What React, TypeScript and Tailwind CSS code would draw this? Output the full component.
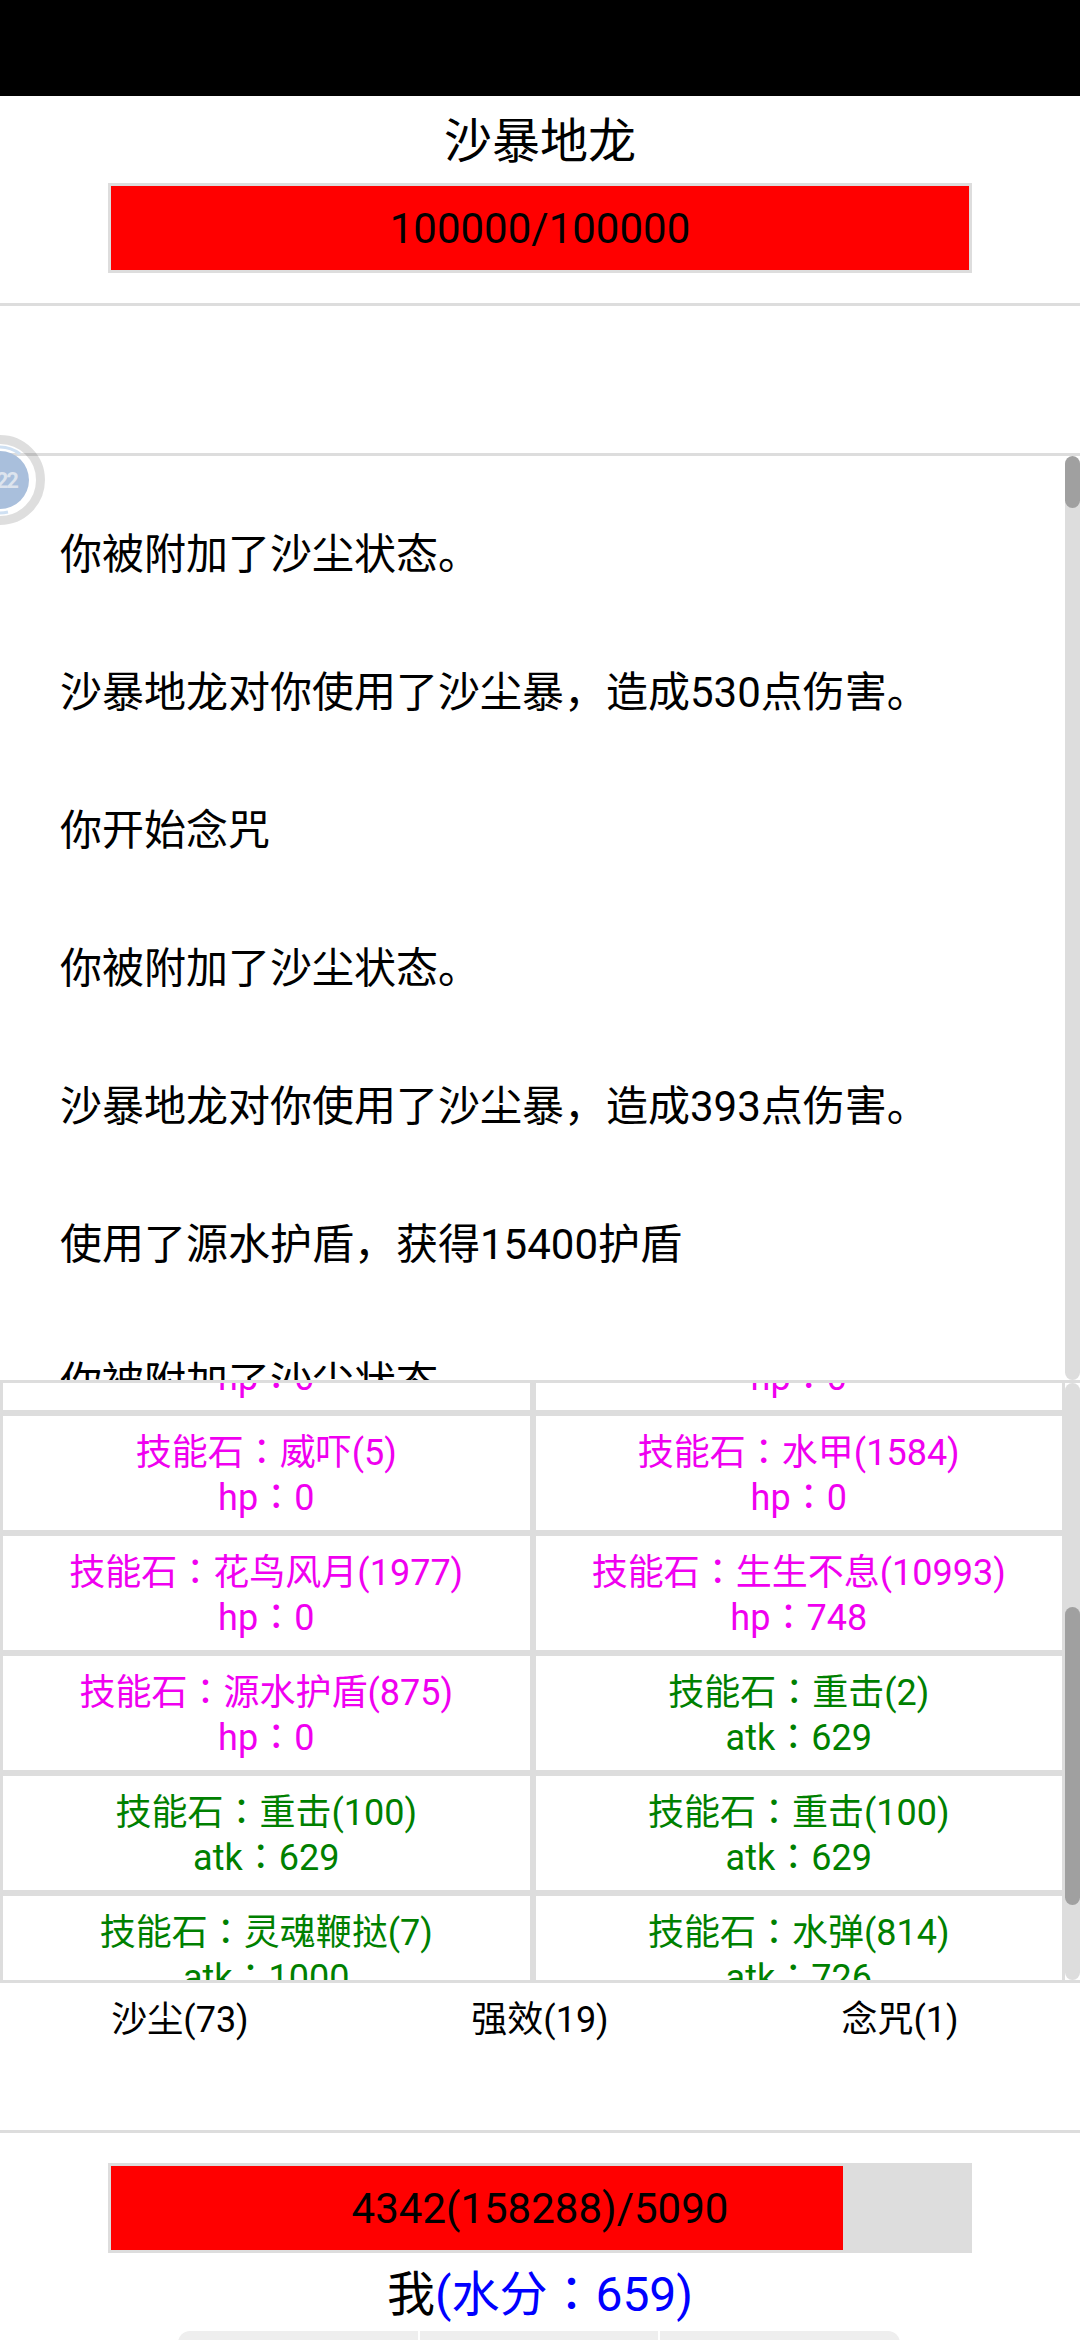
import { useEffect, useRef } from "react";

const logs = [
  "你被附加了沙尘状态。",
  "沙暴地龙对你使用了沙尘暴，造成530点伤害。",
  "你开始念咒",
  "你被附加了沙尘状态。",
  "沙暴地龙对你使用了沙尘暴，造成393点伤害。",
  "使用了源水护盾，获得15400护盾",
  "你被附加了沙尘状态。",
];

type Stone = { name: string; stat: string; tone: "hp" | "atk" };

const stones: Stone[] = [
  { name: "技能石：水甲(12)", stat: "hp：0", tone: "hp" },
  { name: "技能石：威吓(3)", stat: "hp：0", tone: "hp" },
  { name: "技能石：威吓(5)", stat: "hp：0", tone: "hp" },
  { name: "技能石：水甲(1584)", stat: "hp：0", tone: "hp" },
  { name: "技能石：花鸟风月(1977)", stat: "hp：0", tone: "hp" },
  { name: "技能石：生生不息(10993)", stat: "hp：748", tone: "hp" },
  { name: "技能石：源水护盾(875)", stat: "hp：0", tone: "hp" },
  { name: "技能石：重击(2)", stat: "atk：629", tone: "atk" },
  { name: "技能石：重击(100)", stat: "atk：629", tone: "atk" },
  { name: "技能石：重击(100)", stat: "atk：629", tone: "atk" },
  { name: "技能石：灵魂鞭挞(7)", stat: "atk：1000", tone: "atk" },
  { name: "技能石：水弹(814)", stat: "atk：726", tone: "atk" },
];

// the colon in the reference sits centred in its cell, which the TC cut does
function WithColon({ text }: { text: string }) {
  const [head, tail] = text.split("：");
  return (
    <>
      {head}
      <span className="font-['Noto_Sans_CJK_TC',sans-serif] leading-none">：</span>
      {tail}
    </>
  );
}

function Scrollbar({ top, height }: { top: number; height: number }) {
  return (
    <div className="w-[15px] shrink-0 overflow-hidden rounded-full bg-[#dddddd]">
      <div className="rounded-full bg-[#a0a0a0]" style={{ marginTop: top, height }} />
    </div>
  );
}

function HpBar({ value, max, label }: { value: number; max: number; label: string }) {
  return (
    <div className="relative mx-auto h-[90px] w-[864px] border-[3px] border-[#dddddd] bg-[#dddddd]">
      <div className="h-full bg-[#ff0000]" style={{ width: `${(value / max) * 100}%` }} />
      <div className="absolute inset-0 flex items-center justify-center text-[42px] text-black">{label}</div>
    </div>
  );
}

function Divider() {
  return <div className="h-[3px] bg-[#dddddd]" />;
}

export default function App() {
  const gridRef = useRef<HTMLDivElement>(null);

  useEffect(() => {
    if (gridRef.current) gridRef.current.scrollTop = 90;
  }, []);

  return (
    <div className="relative h-[2340px] w-[1080px] overflow-hidden bg-white font-['Roboto','Noto_Sans_CJK_SC',sans-serif] text-black">
      <div className="h-24 bg-black" />

      {/* Boss */}
      <div className="h-[207px]">
        <div className="h-[87px] pt-[16px] text-center text-[48px] leading-[60px]">沙暴地龙</div>
        <HpBar value={100000} max={100000} label="100000/100000" />
      </div>
      <Divider />
      <div className="h-[147px]" />
      <Divider />

      {/* Battle log */}
      <div className="flex h-[924px]">
        <div className="flex-1 overflow-hidden pl-[60px] pt-[68px] text-[42px] leading-[62px]">
          {logs.map((line, i) => (
            <p key={i} className="mb-[76px]">
              {line}
            </p>
          ))}
        </div>
        <Scrollbar top={0} height={52} />
      </div>
      <Divider />

      {/* Inventory */}
      <div className="flex h-[597px]">
        <div ref={gridRef} className="flex-1 overflow-hidden">
          <div className="grid grid-cols-2">
            {stones.map((stone, i) => (
              <div
                key={i}
                className={`h-[120px] border-[3px] border-[#dddddd] pb-[12px] pt-[15px] text-center text-[36px] leading-[45px] ${
                  stone.tone === "hp" ? "text-[#f000f0]" : "text-[#008000]"
                }`}
              >
                <div>
                  <WithColon text={stone.name} />
                </div>
                <div>
                  <WithColon text={stone.stat} />
                </div>
              </div>
            ))}
          </div>
        </div>
        <Scrollbar top={224} height={298} />
      </div>
      <Divider />

      {/* Status effects */}
      <div className="grid h-[147px] grid-cols-3 pt-[12px] text-center text-[36px] leading-[50px]">
        <div>沙尘(73)</div>
        <div>强效(19)</div>
        <div>念咒(1)</div>
      </div>
      <Divider />

      {/* Player */}
      <div className="pt-[30px]">
        <HpBar value={4342} max={5090} label="4342(158288)/5090" />
        <div className="h-[78px] pt-[12px] text-center text-[48px] leading-[60px]">
          我
          <span className="text-[#0000ff]">
            <WithColon text="(水分：659)" />
          </span>
        </div>
        <div className="ml-[178px] flex h-[40px] w-[722px] gap-[2px] overflow-hidden rounded-t-[12px]">
          <div className="w-[240px] bg-[#eeeeee]" />
          <div className="w-[238px] bg-[#eeeeee]" />
          <div className="w-[240px] bg-[#eeeeee]" />
        </div>
      </div>

      {/* Floating ball */}
      <div className="absolute left-[-45px] top-[435px] flex h-[90px] w-[90px] items-center justify-end pr-[28px]">
        <svg className="absolute inset-0" width="90" height="90" viewBox="0 0 90 90">
          <circle cx="45" cy="45" r="40.5" fill="none" stroke="#000000" strokeOpacity="0.13" strokeWidth="9" />
          <circle cx="45" cy="45" r="29" fill="#a9bfdc" />
          <path d="M45 12a33 33 0 0 1 20 7M45 78a33 33 0 0 0 8-1" fill="none" stroke="#cfe0f2" strokeWidth="3" />
        </svg>
        <span className="relative text-[22px] font-bold tracking-[-2px] text-[#dde4ee]">22</span>
      </div>
    </div>
  );
}
